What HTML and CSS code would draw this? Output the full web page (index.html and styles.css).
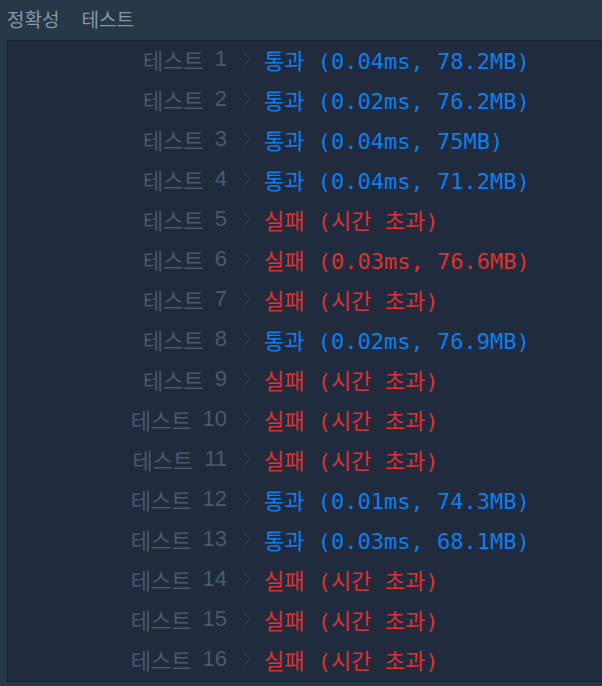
FILE: index.html
```html
<!DOCTYPE html>
<html lang="ko">
<head>
    <meta charset="UTF-8" />
    <title>정확성 테스트</title>
    <link rel="stylesheet" href="styles.css">
</head>
<body>

    <div class="tabs">
        <span class="tab">정확성</span>
        <span class="tab">테스트</span>
    </div>

    <div class="console" id="console"></div>

    <script>
        const results = [
            ['pass', '(0.04ms, 78.2MB)'],
            ['pass', '(0.02ms, 76.2MB)'],
            ['pass', '(0.04ms, 75MB)'],
            ['pass', '(0.04ms, 71.2MB)'],
            ['fail', '(시간 초과)'],
            ['fail', '(0.03ms, 76.6MB)'],
            ['fail', '(시간 초과)'],
            ['pass', '(0.02ms, 76.9MB)'],
            ['fail', '(시간 초과)'],
            ['fail', '(시간 초과)'],
            ['fail', '(시간 초과)'],
            ['pass', '(0.01ms, 74.3MB)'],
            ['pass', '(0.03ms, 68.1MB)'],
            ['fail', '(시간 초과)'],
            ['fail', '(시간 초과)'],
            ['fail', '(시간 초과)']
        ];

        const box = document.getElementById('console');

        results.forEach(([state, detail], i) => {
            const word = state === 'pass' ? '통과' : '실패';
            const row = document.createElement('div');
            row.className = 'row';
            row.innerHTML = `
                <span class="label"><span class="word">테스트</span><span class="num">${i + 1}</span></span>
                <svg class="chevron" width="10" height="16" viewBox="0 0 10 16"><path d="M2 1.5 L8 8 L2 14.5" fill="none" stroke="currentColor" stroke-width="1.2"/></svg>
                <span class="result ${state}"><span class="ko">${word}</span> ${detail}</span>`;
            box.appendChild(row);
        });
    </script>

</body>
</html>
```

FILE: styles.css
```css
:root {
    --page: #263747;
    --panel: #202b3d;
    --edge: #18212f;
    --label: #4a5a6d;
    --chevron: #2f3d4f;
    --pass: #0e7fef;
    --fail: #e1302f;
    --tab: #8597a8;
}

* {
    box-sizing: border-box;
    margin: 0;
    padding: 0;
}

body {
    background: var(--page);
    font-family: 'Noto Sans CJK KR', 'Noto Sans', sans-serif;
    height: 686px;
    overflow: hidden;
}

.tabs {
    height: 40px;
    display: flex;
    align-items: center;
    gap: 22px;
    padding: 0 0 4px 7px;
}

.tab {
    font-size: 19px;
    color: var(--tab);
}

.console {
    margin-left: 7px;
    background: var(--panel);
    border: 1px solid var(--edge);
    border-right: none;
}

.row {
    height: 40px;
    padding-bottom: 4px;
    display: flex;
    align-items: center;
}

.label {
    width: 219px;
    display: flex;
    justify-content: flex-end;
    align-items: center;
    gap: 11px;
    color: var(--label);
}

.word {
    font-size: 22px;
}

.num {
    font-family: 'Liberation Sans', sans-serif;
    font-size: 22px;
}

.chevron {
    color: var(--chevron);
    margin: 0 12px 0 15px;
}

.result {
    font-family: 'DejaVu Sans Mono', 'Noto Sans CJK KR', monospace;
    font-size: 22px;
    white-space: pre;
}

.result .ko {
    font-family: 'Noto Sans CJK KR', sans-serif;
    font-size: 22px;
}

.result.pass {
    color: var(--pass);
}

.result.fail {
    color: var(--fail);
}
```
